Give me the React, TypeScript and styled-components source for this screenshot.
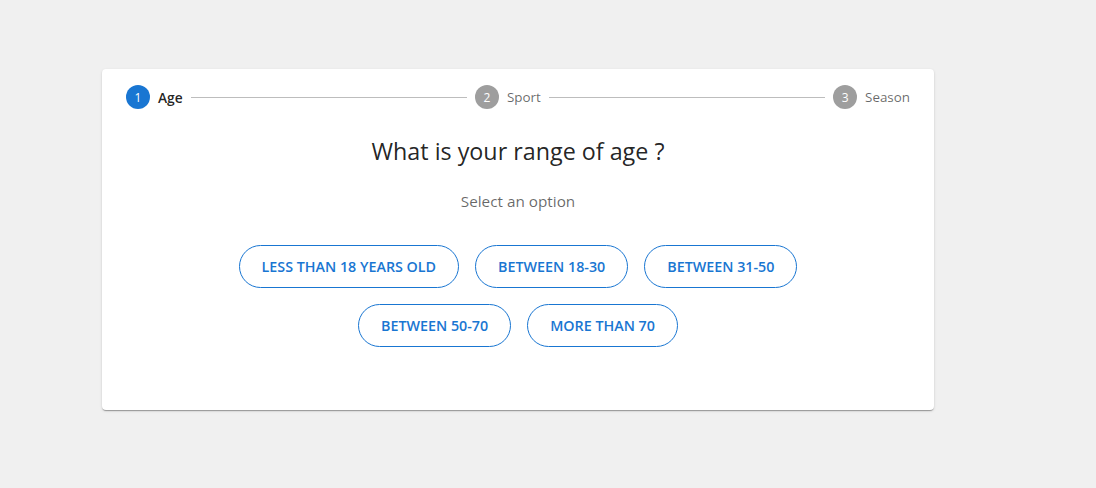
import React, { FC } from 'react';
import styled, { createGlobalStyle } from 'styled-components';

const GlobalStyle = createGlobalStyle`
  html, body {
    margin: 0;
    padding: 0;
    background-color: #f0f0f0;
  }
  body {
    font-family: 'Open Sans', 'Noto Sans', sans-serif;
  }
`;

const Page = styled.div`
  box-sizing: border-box;
  width: 1096px;
  height: 488px;
  padding: 69px 0 0 102px;
`;

const Card = styled.div`
  box-sizing: border-box;
  width: 832px;
  height: 341px;
  padding: 16px 24px;
  background-color: #fff;
  border-radius: 4px;
  box-shadow: 0 2px 1px -1px rgba(0, 0, 0, 0.2), 0 1px 1px 0 rgba(0, 0, 0, 0.14),
    0 1px 3px 0 rgba(0, 0, 0, 0.12);
  display: flex;
  flex-direction: column;
  align-items: center;
`;

const Stepper = styled.div`
  display: flex;
  align-items: center;
  width: 100%;
`;

const Step = styled.div`
  display: flex;
  align-items: center;
`;

const StepIcon = styled.div<{ active: boolean }>`
  width: 24px;
  height: 24px;
  border-radius: 50%;
  background-color: ${(props) => (props.active ? '#1976d2' : '#9e9e9e')};
  color: #fff;
  font-size: 12px;
  display: flex;
  align-items: center;
  justify-content: center;
`;

const StepLabel = styled.span<{ active: boolean }>`
  padding-left: 8px;
  font-size: ${(props) => (props.active ? '13.8px' : '13.4px')};
  font-weight: ${(props) => (props.active ? 600 : 400)};
  color: ${(props) => (props.active ? 'rgba(0, 0, 0, 0.87)' : 'rgba(0, 0, 0, 0.6)')};
`;

const Connector = styled.div`
  flex: 1;
  margin: 0 8px;
  border-top: 1px solid #bdbdbd;
`;

const Title = styled.h2`
  margin: 26px 0 0;
  font-size: 23.3px;
  font-weight: 400;
  line-height: 1.4;
  color: rgba(0, 0, 0, 0.87);
`;

const Subtitle = styled.p`
  margin: 22px 0 0;
  font-size: 15.3px;
  line-height: 1.5;
  color: rgba(0, 0, 0, 0.6);
`;

const Options = styled.div`
  margin-top: 32px;
  display: flex;
  flex-wrap: wrap;
  justify-content: center;
  gap: 16px;
  max-width: 600px;
`;

const OptionBtn = styled.button`
  box-sizing: border-box;
  height: 43px;
  padding: 0 22px;
  border: 1px solid #1976d2;
  border-radius: 22px;
  background-color: #fff;
  font-family: inherit;
  font-size: 14.3px;
  font-weight: 600;
  text-transform: uppercase;
  color: #1976d2;
  cursor: pointer;
  &:hover {
    background-color: rgba(25, 118, 210, 0.04);
  }
`;

const steps = ['Age', 'Sport', 'Season'];
const options = [
  'Less than 18 years old',
  'Between 18-30',
  'Between 31-50',
  'Between 50-70',
  'More than 70',
];

const App: FC = () => {
  const activeStep = 0;
  return (
    <>
      <GlobalStyle />
      <Page>
        <Card>
          <Stepper>
            {steps.map((label, i) => (
              <React.Fragment key={label}>
                {i > 0 && <Connector />}
                <Step>
                  <StepIcon active={i === activeStep}>{i + 1}</StepIcon>
                  <StepLabel active={i === activeStep}>{label}</StepLabel>
                </Step>
              </React.Fragment>
            ))}
          </Stepper>
          <Title>What is your range of age ?</Title>
          <Subtitle>Select an option</Subtitle>
          <Options>
            {options.map((o) => (
              <OptionBtn key={o}>{o}</OptionBtn>
            ))}
          </Options>
        </Card>
      </Page>
    </>
  );
};

export default App;
